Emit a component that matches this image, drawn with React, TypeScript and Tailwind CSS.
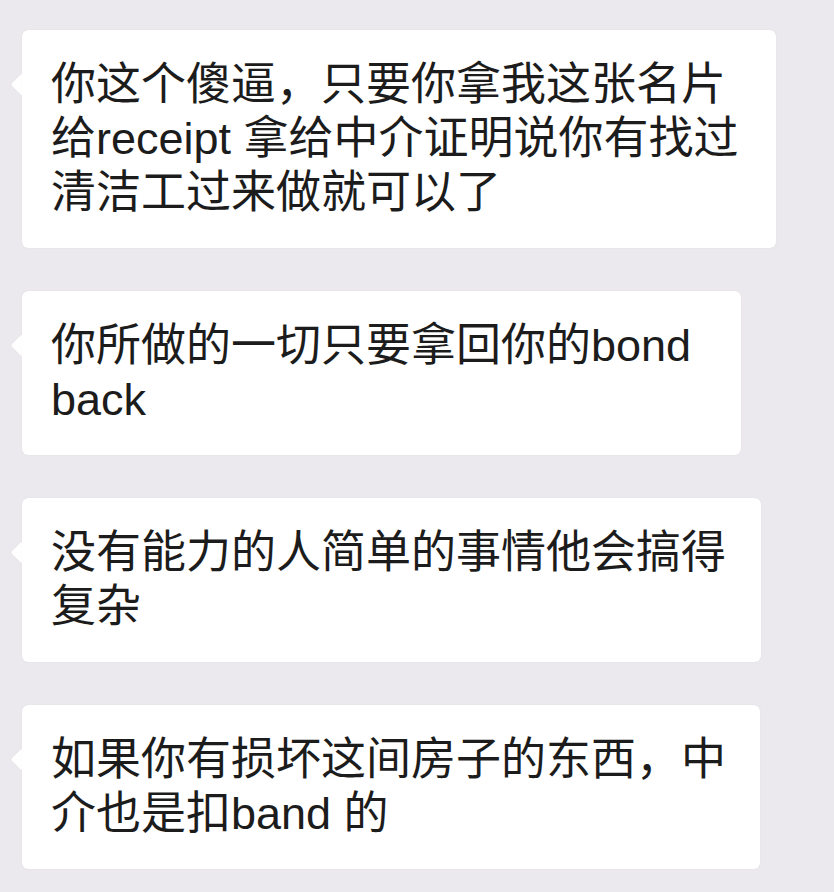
import React from "react";

interface Msg {
  lines: string[];
  width: string;
}

const messages: Msg[] = [
  {
    lines: ["你这个傻逼，只要你拿我这张名片", "给receipt 拿给中介证明说你有找过", "清洁工过来做就可以了"],
    width: "w-[754px]",
  },
  {
    lines: ["你所做的一切只要拿回你的bond", "back"],
    width: "w-[719px]",
  },
  {
    lines: ["没有能力的人简单的事情他会搞得", "复杂"],
    width: "w-[739px]",
  },
  {
    lines: ["如果你有损坏这间房子的东西，中", "介也是扣band 的"],
    width: "w-[738px]",
  },
];

function Bubble({ msg }: { msg: Msg }) {
  return (
    <div className={`relative ${msg.width}`}>
      {/* tail */}
      <div className="absolute left-[-8px] top-[46px] h-[17px] w-[17px] rotate-45 rounded-[2px] bg-white shadow-[0_0_1px_rgba(0,0,0,0.12)]" />
      <div className="relative rounded-[6px] bg-white py-[28px] pl-[29px] pr-4 shadow-[0_0_1px_rgba(0,0,0,0.15)]">
        {msg.lines.map((line, i) => (
          <div key={i} className="whitespace-nowrap text-[45px] leading-[54px] text-[#1c1c1c]">
            {line}
          </div>
        ))}
      </div>
    </div>
  );
}

export default function App() {
  return (
    <div
      className="min-h-[892px] w-[834px] bg-[#ebe9ed] pl-[22px] pt-[30px]"
      style={{ fontFamily: '"Liberation Sans", "Noto Sans CJK SC", sans-serif' }}
    >
      <div className="flex flex-col gap-[43px]">
        {messages.map((m, i) => (
          <Bubble key={i} msg={m} />
        ))}
      </div>
    </div>
  );
}
